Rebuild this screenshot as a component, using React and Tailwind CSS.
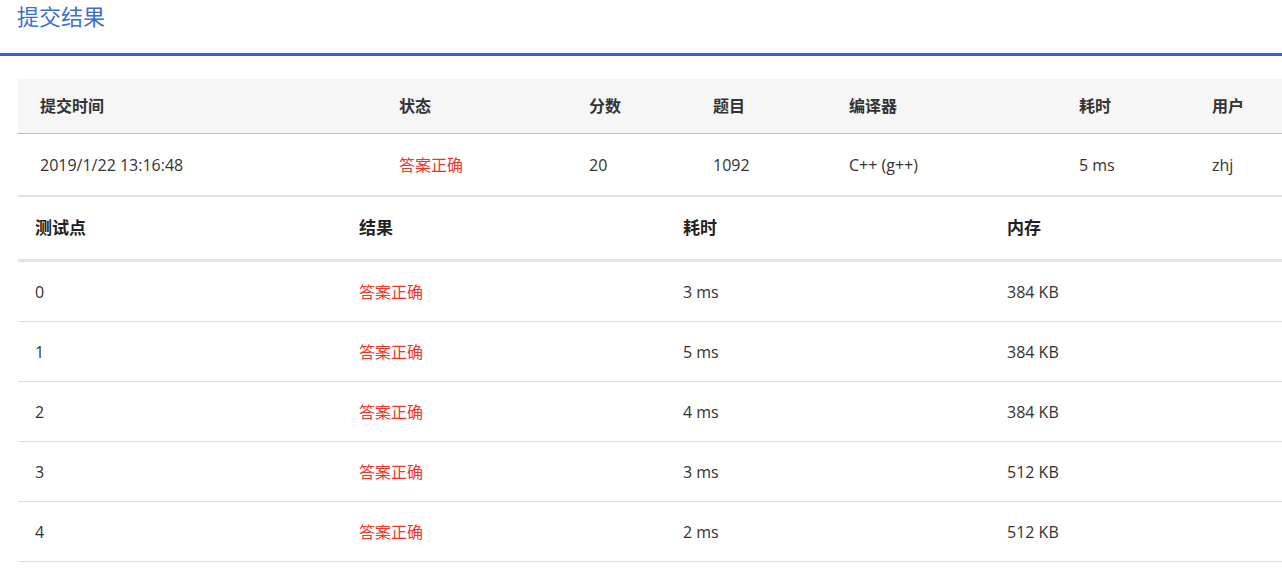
const F = { fontFamily: '"Open Sans","Noto Sans CJK SC",sans-serif' };
const c1 = ["w-[359px]","w-[190px]","w-[124px]","w-[136px]","w-[230px]","w-[133px]","w-[120px]"];
const h1 = ["提交时间","状态","分数","题目","编译器","耗时","用户"];
const r1 = ["2019/1/22 13:16:48","答案正确","20","1092","C++ (g++)","5 ms","zhj"];
const rows = [["0","3 ms","384 KB"],["1","5 ms","384 KB"],["2","4 ms","384 KB"],["3","3 ms","512 KB"],["4","2 ms","512 KB"]];
export default function App() {
  return (
    <div className="w-[1282px] h-[568px] overflow-hidden bg-white text-[#333]" style={F}>
      <div className="h-[53px] pl-[17px] pt-[1px] text-[22px] text-[#3a6fd0] leading-[30px]">提交结果</div>
      <div className="h-[3px] bg-[#3366cc]" />
      <div className="ml-[18px] mt-[23px] w-[1300px]">
        <div className="flex h-[55px] items-center bg-[#f6f6f6] border-b border-[#bbb] font-bold text-[16px] text-[#333]">
          {h1.map((h, i) => <div key={i} className={`${c1[i]} pl-[22px] shrink-0`}>{h}</div>)}
        </div>
        <div className="flex h-[63px] items-center border-b-2 border-[#e3e3e3] text-[16px]">
          {r1.map((h, i) => <div key={i} className={`${c1[i]} pl-[22px] shrink-0 ${i === 1 ? "text-[#f0362a]" : ""}`}>{h}</div>)}
        </div>
        <div className="flex h-[65px] items-center border-b-[3px] border-[#e3e3e3] font-bold text-[17px] text-[#222]">
          {["测试点","结果","耗时","内存"].map((h, i) => <div key={i} className="w-[324px] pl-[17px] shrink-0">{h}</div>)}
        </div>
        {rows.map((r, j) => (
          <div key={j} className="flex h-[60px] items-center border-b border-[#ddd] text-[16px] w-[1264px]">
            <div className="w-[324px] pl-[17px] shrink-0">{r[0]}</div>
            <div className="w-[324px] pl-[17px] shrink-0 text-[#f0362a]">答案正确</div>
            <div className="w-[324px] pl-[17px] shrink-0">{r[1]}</div>
            <div className="w-[292px] pl-[17px] shrink-0">{r[2]}</div>
          </div>
        ))}
      </div>
    </div>
  );
}
